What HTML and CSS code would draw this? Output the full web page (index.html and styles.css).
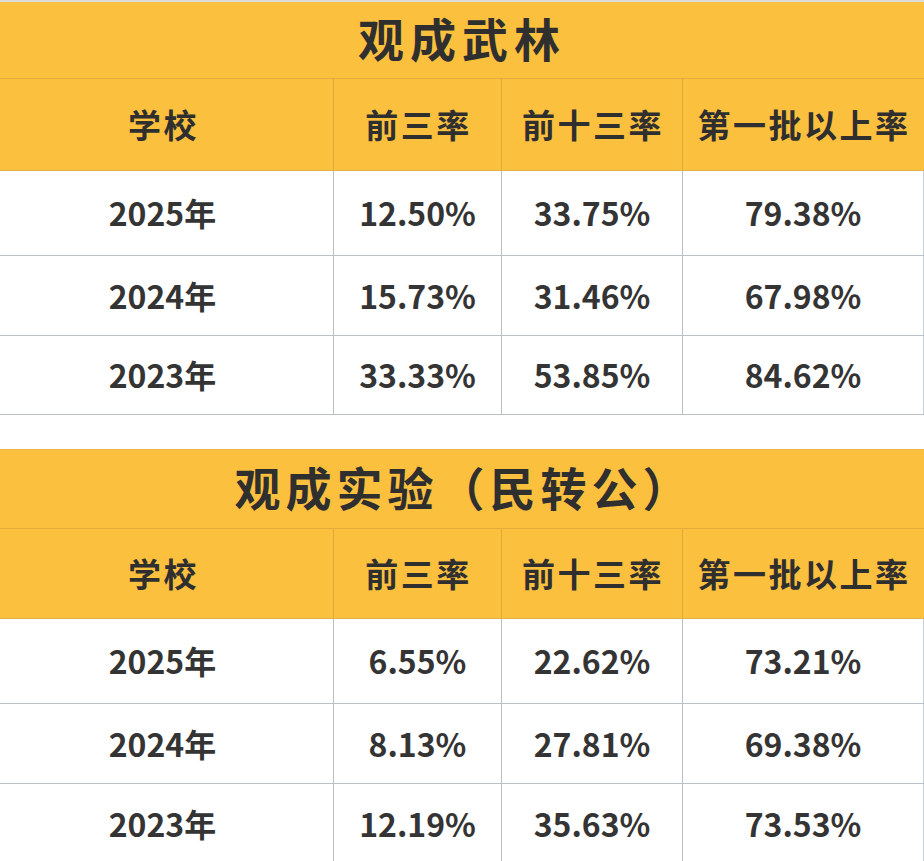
FILE: index.html
```html
<!DOCTYPE html>
<html lang="zh-CN">
<head>
<meta charset="utf-8">
<title>观成武林</title>
<link rel="stylesheet" href="styles.css">
</head>
<body>
<section class="block first">
  <div class="title">观成武林</div>
  <div class="row head h1"><div class="cell">学校</div><div class="cell">前三率</div><div class="cell">前十三率</div><div class="cell">第一批以上率</div></div>
  <div class="row r1"><div class="cell">2025年</div><div class="cell">12.50%</div><div class="cell">33.75%</div><div class="cell">79.38%</div></div>
  <div class="row r2"><div class="cell">2024年</div><div class="cell">15.73%</div><div class="cell">31.46%</div><div class="cell">67.98%</div></div>
  <div class="row r3"><div class="cell">2023年</div><div class="cell">33.33%</div><div class="cell">53.85%</div><div class="cell">84.62%</div></div>
</section>
<section class="block second">
  <div class="title t2">观成实验（民转公）</div>
  <div class="row head h2"><div class="cell">学校</div><div class="cell">前三率</div><div class="cell">前十三率</div><div class="cell">第一批以上率</div></div>
  <div class="row r1"><div class="cell">2025年</div><div class="cell">6.55%</div><div class="cell">22.62%</div><div class="cell">73.21%</div></div>
  <div class="row r2"><div class="cell">2024年</div><div class="cell">8.13%</div><div class="cell">27.81%</div><div class="cell">69.38%</div></div>
  <div class="row r3 last"><div class="cell">2023年</div><div class="cell">12.19%</div><div class="cell">35.63%</div><div class="cell">73.53%</div></div>
</section>
</body>
</html>
```
FILE: styles.css
```css
html, body {
  margin: 0;
  padding: 0;
  background: #ffffff;
}
body {
  width: 924px;
  height: 861px;
  overflow: hidden;
  font-family: "Noto Sans CJK SC", "Noto Sans", sans-serif;
  font-weight: 700;
  color: #343434;
}
.block {
  display: flex;
  flex-direction: column;
}
.first {
  border-top: 2px solid #dcdcdc;
}
.second {
  margin-top: 34px;
  border-top: 1px solid #e8b64a;
}
.title {
  height: 77px;
  box-sizing: border-box;
  background: #fcc03f;
  border-bottom: 1px solid #e3ab3c;
  display: flex;
  align-items: center;
  justify-content: center;
  font-size: 46px;
  letter-spacing: 6px;
  color: #2f2f2f;
  padding-left: 0;
  padding-bottom: 6px;
}
.t2 {
  height: 79px;
  letter-spacing: 5px;
  padding-left: 4px;
}
.row {
  display: grid;
  grid-template-columns: 334px 168px 181px 1fr;
  border-bottom: 1px solid #b9c1c8;
  font-size: 32px;
}
.cell {
  display: flex;
  align-items: center;
  justify-content: center;
  border-right: 1px solid #b9c1c8;
  padding-bottom: 2px;
}
.cell:last-child {
  border-right: 1px solid #c9d0d6;
}
.head {
  background: #fcc03f;
  color: #2f2f2f;
  font-size: 33px;
  letter-spacing: 2.5px;
  border-bottom-color: #e2b04a;
}
.head .cell {
  border-right-color: #e0aa3a;
  padding-left: 2px;
}
.head .cell:last-child {
  border-right-color: #fcc03f;
}
.h1 { height: 91px; }
.h2 { height: 89px; }
.first .r1 { height: 84px; }
.first .r2 { height: 79px; }
.first .r3 { height: 78px; }
.second .r1 { height: 84px; }
.second .r2 { height: 79px; }
.second .r3 { height: 80px; }
.cell:first-child {
  padding-right: 8px;
}
.last {
  border-bottom: none;
}
```
